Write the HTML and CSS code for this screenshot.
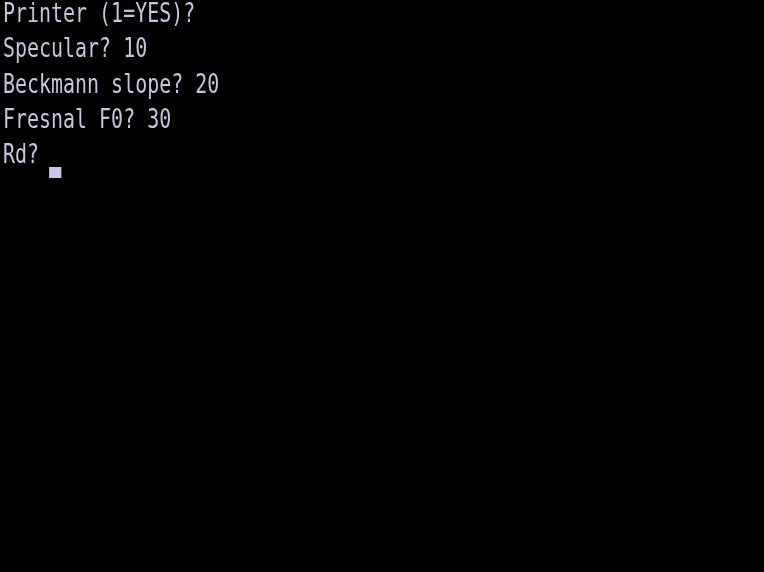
FILE: index.html
```html
<!DOCTYPE html>
<html>
<head>
<meta charset="utf-8">
<link rel="stylesheet" href="styles.css">
</head>
<body>
<div class="screen">
  <div class="line">Printer (1=YES)?</div>
  <div class="line">Specular? 10</div>
  <div class="line">Beckmann slope? 20</div>
  <div class="line">Fresnal F0? 30</div>
  <div class="line">Rd? <span class="cursor"></span></div>
</div>
</body>
</html>
```
FILE: styles.css
```css
html, body {
  margin: 0;
  padding: 0;
  background: #000;
  width: 764px;
  height: 572px;
  overflow: hidden;
}
.screen {
  display: flex;
  flex-direction: column;
  gap: 9.25px;
  padding-left: 4px;
  font-family: "DejaVu Sans Mono", monospace;
  font-size: 26px;
  line-height: 26px;
  color: #c6c6e0;
  transform: scaleX(0.767);
  transform-origin: 0 0;
  filter: blur(0.45px);
}
.line {
  height: 26px;
  white-space: pre;
}
.cursor {
  display: inline-block;
  width: 15.6px;
  height: 11px;
  margin-left: -2.6px;
  vertical-align: -15px;
  background: #c8c8e2;
}
```
